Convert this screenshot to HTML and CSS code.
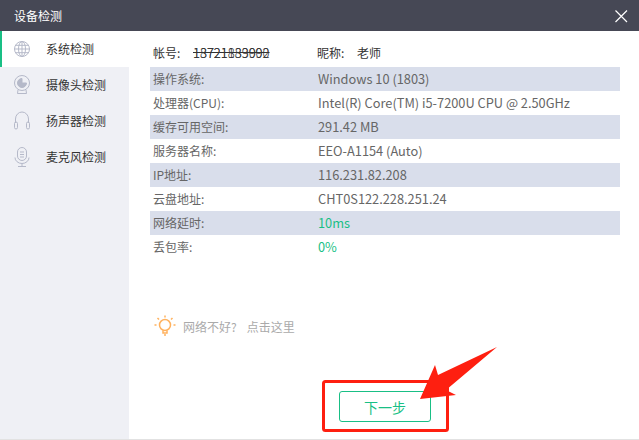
FILE: index.html
```html
<!DOCTYPE html>
<html lang="zh-CN">
<head>
    <meta charset="UTF-8">
    <title>设备检测</title>
    <link rel="stylesheet" href="styles.css">
</head>
<body>
    <div class="window">
        <header class="titlebar">
            <span class="title">设备检测</span>
            <svg class="close" width="14" height="14" viewBox="0 0 14 14"><path d="M1.500 1.500 L13 13 M13 1.500 L1.500 13"/></svg>
        </header>

        <div class="content">
            <nav class="sidebar">
                <div class="nav-item active">
                    <svg class="nav-icon" width="18" height="18" viewBox="0 0 18 18">
                        <circle cx="9" cy="9" r="7.500"/>
                        <ellipse cx="9" cy="9" rx="3.500" ry="7.500"/>
                        <path d="M9 1.500 V16.500 M1.500 9 H16.500 M2.600 5.300 H15.400 M2.600 12.700 H15.400"/>
                    </svg>
                    <span>系统检测</span>
                </div>
                <div class="nav-item">
                    <svg class="nav-icon" width="18" height="20" viewBox="0 0 18 20">
                        <circle cx="9" cy="8" r="7.500"/>
                        <path class="solid" d="M9 3.500 A4.500 4.500 0 1 0 13.500 8 L9 8 Z"/>
                        <path d="M5 15 L4.500 18.500 H13.500 L13 15"/>
                    </svg>
                    <span>摄像头检测</span>
                </div>
                <div class="nav-item">
                    <svg class="nav-icon" width="18" height="20" viewBox="0 0 18 20">
                        <path d="M2.500 12 V8 A6.500 7 0 0 1 15.500 8 V12"/>
                        <rect x="1.500" y="11" width="3" height="7" rx="1.500"/>
                        <rect x="13.500" y="11" width="3" height="7" rx="1.500"/>
                    </svg>
                    <span>扬声器检测</span>
                </div>
                <div class="nav-item">
                    <svg class="nav-icon" width="18" height="20" viewBox="0 0 18 20">
                        <rect x="4.500" y="0.500" width="9" height="13" rx="4.500"/>
                        <path d="M7 5 H11 M7 7.500 H11 M7 10 H11"/>
                        <path d="M2 10.500 A7 6 0 0 0 16 10.500 M9 16.500 V19 M5 19.500 H13"/>
                    </svg>
                    <span>麦克风检测</span>
                </div>
            </nav>

            <main class="main">
                <div class="account">
                    <span class="account-label">帐号:</span>
                    <span class="account-value">
                        <span>18721183990</span>
                        <span class="smear">13721839002</span>
                    </span>
                    <span class="account-label">昵称:</span>
                    <span>老师</span>
                </div>

                <div class="info-list">
                    <div class="info-row"><span>操作系统:</span><span class="value">Windows 10 (1803)</span></div>
                    <div class="info-row"><span>处理器(CPU):</span><span class="value">Intel(R) Core(TM) i5-7200U CPU @ 2.50GHz</span></div>
                    <div class="info-row"><span>缓存可用空间:</span><span class="value">291.42 MB</span></div>
                    <div class="info-row"><span>服务器名称:</span><span class="value">EEO-A1154 (Auto)</span></div>
                    <div class="info-row"><span>IP地址:</span><span class="value">116.231.82.208</span></div>
                    <div class="info-row"><span>云盘地址:</span><span class="value">CHT0S122.228.251.24</span></div>
                    <div class="info-row"><span>网络延时:</span><span class="value good">10ms</span></div>
                    <div class="info-row"><span>丢包率:</span><span class="value good">0%</span></div>
                </div>

                <div class="hint">
                    <svg width="22" height="22" viewBox="0 0 22 22">
                        <circle cx="11" cy="10" r="5.500"/>
                        <path d="M9 15.500 V18 H13 V15.500 M10 20 H12"/>
                        <path d="M11 0.500 V2.500 M3.500 3 L5 4.500 M18.500 3 L17 4.500 M0.500 10 H2.500 M19.500 10 H21.500"/>
                    </svg>
                    <span>网络不好?</span>
                    <span class="hint-link">点击这里</span>
                </div>

                <div class="actions">
                    <button class="next-btn">下一步</button>
                </div>
            </main>
        </div>
    </div>

    <!-- red annotation drawn on top of the screenshot -->
    <svg class="annotation" width="639" height="440" viewBox="0 0 639 440">
        <rect x="323.500" y="381.500" width="124" height="49" rx="2"/>
        <polygon points="497,347 438,375 435,365 420,399 456,395 446,390"/>
    </svg>
</body>
</html>
```

FILE: styles.css
```css
* {
    margin: 0;
    padding: 0;
    box-sizing: border-box;
}

body {
    background-color: #fff;
    font-family: "Noto Sans CJK SC", "Noto Sans", sans-serif;
    font-size: 12px;
    color: #666;
    position: relative;
    width: 639px;
    height: 440px;
    overflow: hidden;
}

.window {
    height: 440px;
    display: flex;
    flex-direction: column;
}

.titlebar {
    height: 31px;
    flex-shrink: 0;
    background-color: #464855;
    color: #fff;
    display: flex;
    align-items: center;
    justify-content: space-between;
    padding: 0 11px 0 14px;
}

.close path {
    stroke: #fff;
    stroke-width: 1.200;
    fill: none;
}

.content {
    flex: 1;
    display: flex;
    border-bottom: 1px solid #e2e2e2;
}

.sidebar {
    width: 129px;
    background-color: #eff0f5;
}

.nav-item {
    height: 36px;
    display: flex;
    align-items: center;
    gap: 15px;
    padding: 0 0 1px 13px;
    color: #333;
}

.nav-item.active {
    background-color: #fff;
    border-left: 2px solid #19bf85;
    padding-left: 11px;
}

.nav-icon {
    fill: none;
    stroke: #b5b9c9;
    stroke-width: 1;
}

.nav-icon .solid {
    fill: #b5b9c9;
}

.main {
    flex: 1;
    display: flex;
    flex-direction: column;
    padding: 0 19px 0 21px;
}

.account {
    height: 36px;
    display: flex;
    align-items: center;
    padding: 6px 0 0 3px;
    color: #333;
}

.account-label {
    width: 40px;
}

.account-value {
    width: 124px;
    position: relative;
    font-size: 13px;
    font-weight: 300;
    text-decoration: line-through;
}

.smear {
    position: absolute;
    left: 0;
    top: 0;
}

.info-row {
    height: 24px;
    display: grid;
    grid-template-columns: 165px 1fr;
    align-items: center;
    padding: 0 0 1px 3px;
}

.info-row:nth-child(odd) {
    background-color: #d9deeb;
}

.value {
    font-size: 12.800px;
}

.good {
    color: #19bf85;
}

.hint {
    margin-top: 56px;
    display: flex;
    align-items: center;
    gap: 7px;
    padding-left: 4px;
    color: #aaa;
}

.hint-link {
    margin-left: 3px;
}

.hint svg {
    fill: none;
    stroke: #ffb25f;
    stroke-width: 1.500;
}

.actions {
    margin-top: 54px;
    padding-left: 189px;
    display: flex;
}

.next-btn {
    width: 92px;
    height: 31px;
    background-color: #fff;
    border: 1px solid #19bf85;
    border-radius: 3px;
    color: #19bf85;
    font: inherit;
    font-size: 14px;
}

.annotation {
    position: absolute;
    left: 0;
    top: 0;
}

.annotation rect {
    fill: none;
    stroke: #fe1f10;
    stroke-width: 3;
}

.annotation polygon {
    fill: #fe1f10;
}
```
